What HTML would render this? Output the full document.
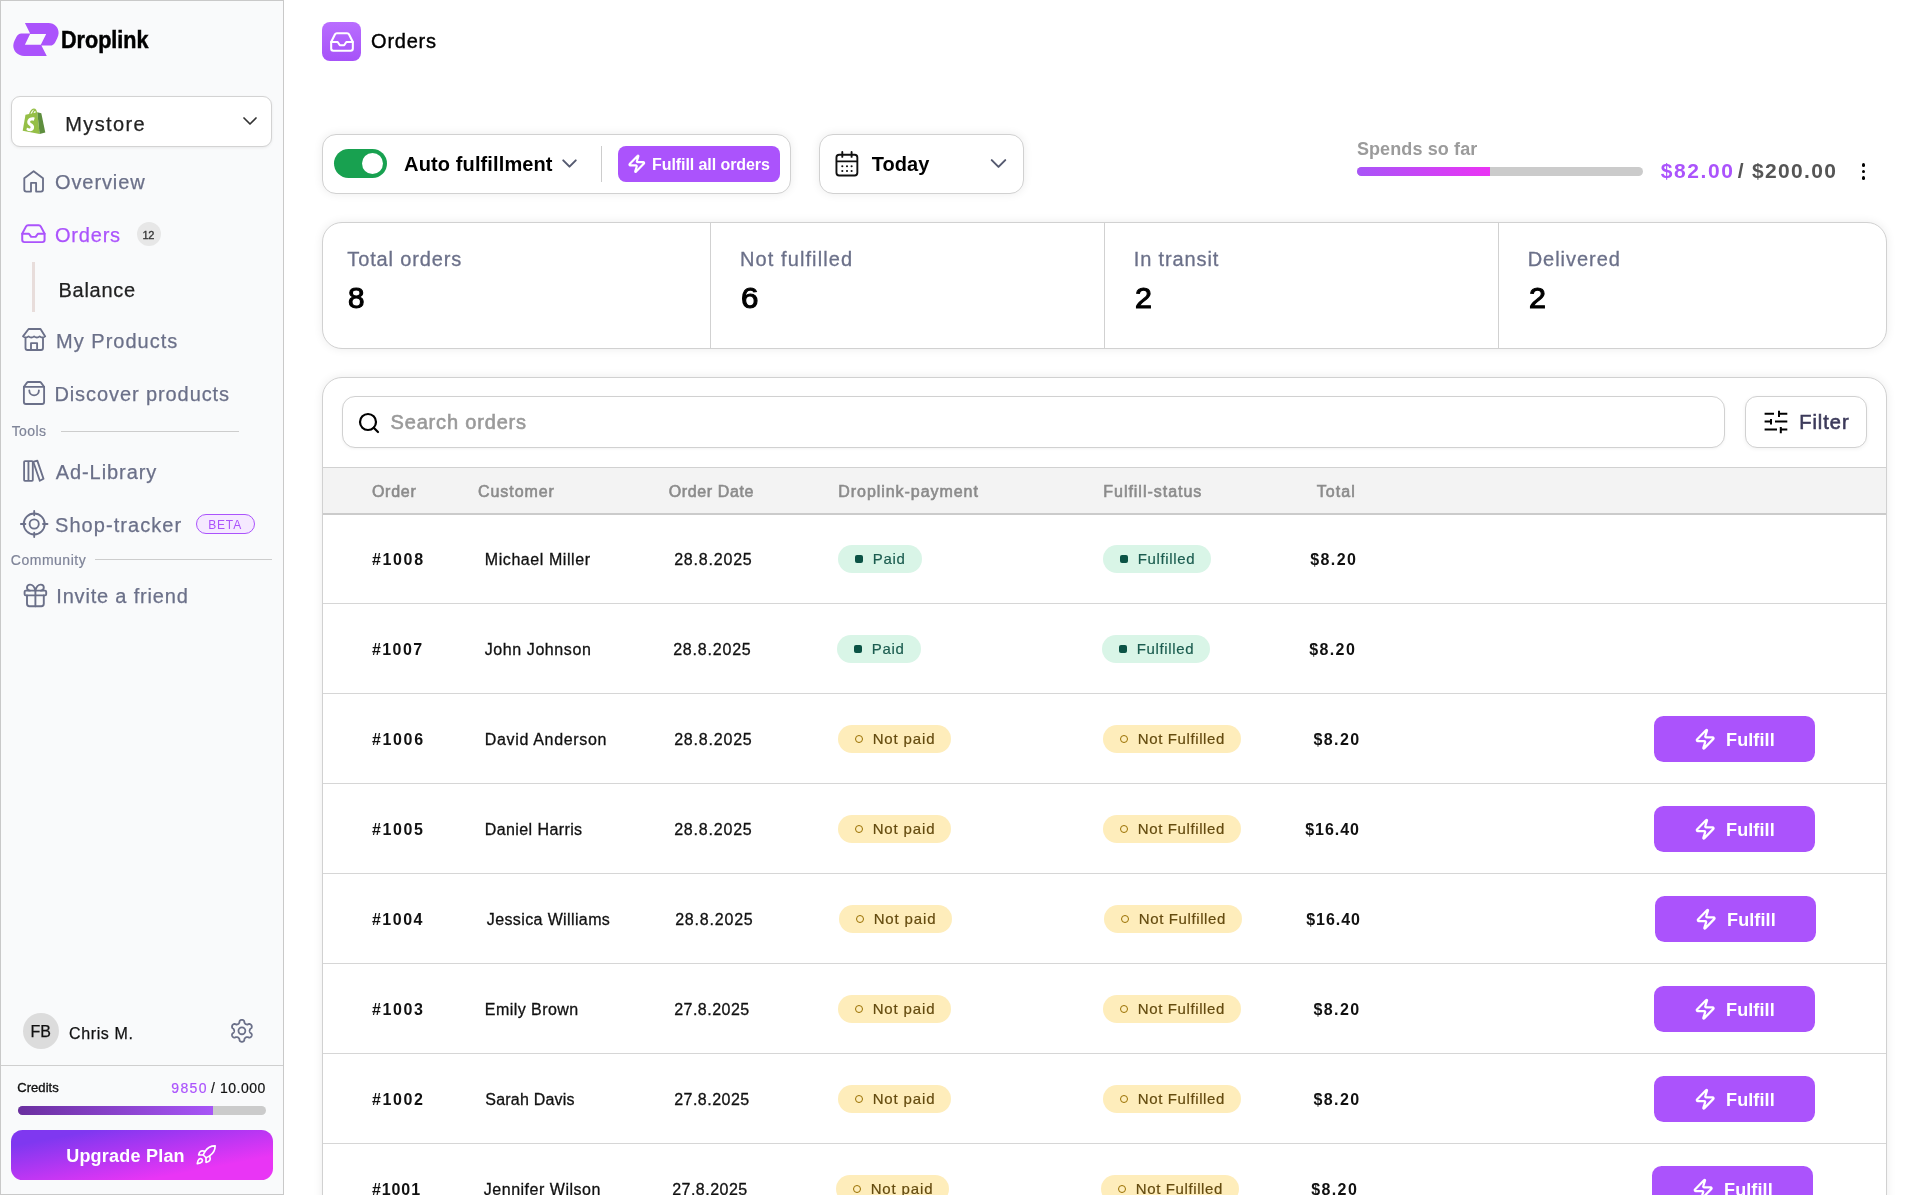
<!DOCTYPE html>
<html lang="en">
<head>
<meta charset="utf-8">
<title>Droplink – Orders</title>
<style>
*{box-sizing:border-box;margin:0;padding:0}
html,body{width:1912px;height:1195px;overflow:hidden;background:#fff;font-family:"Liberation Sans",sans-serif}
body{position:relative}
.t{position:absolute;white-space:nowrap;display:block}
.a{position:absolute}
.ic{position:absolute;overflow:visible}
#side{position:absolute;left:0;top:0;width:284px;height:1195px;background:#f9fafb;border:1px solid #c9c9c9}
.card{position:absolute;background:#fff;border:1px solid #d1d1d1;box-shadow:0 0 10px rgba(0,0,0,.08)}
.bd{position:absolute;height:28px;border-radius:14px}
.bd.g{background:#d9f5e7}
.bd.y{background:#feedbb}
.sq{position:absolute;width:8px;height:8px;border-radius:2px;background:#0b5345}
.rg{position:absolute;width:8.400px;height:8.400px;border-radius:50%;border:1.700px solid #9a7000}
.fb{position:absolute;width:161px;height:46px;border-radius:9.5px;background:#ab53fc}
.hl{position:absolute;left:323px;width:1563px;height:1px;background:#d6d6d6}
</style>
</head>
<body>
<svg width="0" height="0" style="position:absolute">
<defs>
<path id="zap" d="M4 14a1 1 0 0 1-.78-1.63l9.9-10.2a.5.5 0 0 1 .86.46l-1.92 6.02A1 1 0 0 0 13 10h7a1 1 0 0 1 .78 1.63l-9.9 10.2a.5.5 0 0 1-.86-.46l1.92-6.02A1 1 0 0 0 11 14z"/>
<g id="inbox"><polyline points="22 12 16 12 14 15 10 15 8 12 2 12"/><path d="M5.45 5.11 2 12v6a2 2 0 0 0 2 2h16a2 2 0 0 0 2-2v-6l-3.45-6.89A2 2 0 0 0 16.76 4H7.24a2 2 0 0 0-1.79 1.11z"/></g>
<polyline id="chev" points="6 9 12 15 18 9"/>
</defs>
</svg>

<!-- ================= SIDEBAR ================= -->
<div id="side"></div>
<!-- logo -->
<svg class="ic" style="left:0;top:0;width:70px;height:70px" viewBox="0 0 70 70"><path fill="#ab53fc" fill-rule="evenodd" d="M24.9 23h23.6c6 0 10.4 4.6 10.1 10.2c-.1 1.800-.6 3.4-1.400 5l-2.100 4.200c-1 2-2.800 3.200-5 3.200h-8.700l5.400 10.300h-22.600c-6.300 0-11.200-5-10.900-10.700c.1-1.600.6-3.100 1.300-4.600l1.900-3.800c.9-2 2.700-3.300 4.800-3.300h8.800zM30.100 33.900l-5.200 10.900h15.900l5.400-10.900z"/></svg>
<!-- store select -->
<div class="a" style="left:11px;top:96px;width:261px;height:51px;background:#fff;border:1px solid #d3d3d3;border-radius:9px;box-shadow:0 1px 3px rgba(0,0,0,.07)"></div>
<svg class="ic" style="left:22px;top:107.500px;width:24px;height:27px" viewBox="0 0 24 27">
<path fill="#95bf47" d="M3.500 6.800 15.300 4.300 17.600 25.900 0.700 22.800z"/>
<path fill="#5e8e3e" d="M15.300 4.300 19.300 5.200 23.300 24.600 17.600 25.900z"/>
<path fill="none" stroke="#95bf47" stroke-width="1.300" d="M7.500 7.500c.3-3.500 2.400-6.300 4.300-6.300 1.700 0 2.600 2.200 2.700 4.500M10.300 6.800c.6-2.800 2-4.800 3.400-5"/>
<path fill="#fff" d="M12.600 10.300l-.9 2.700s-.9-.5-2-.4c-1.500.1-1.500 1.100-1.500 1.300.1 1.400 3.700 1.700 3.900 4.900.2 2.600-1.400 4.300-3.600 4.400-2.700.2-4.100-1.400-4.100-1.400l.6-2.400s1.500 1.100 2.600 1c.8 0 1.100-.7 1-1.100-.1-1.800-3.100-1.700-3.300-4.700-.2-2.500 1.500-5.100 5.100-5.300 1.500-.1 2.200.3 2.200.3z"/>
</svg>
<svg class="ic" style="left:238.300px;top:109.400px;width:24px;height:24px" viewBox="0 0 24 24" fill="none" stroke="#333" stroke-width="1.700" stroke-linecap="round" stroke-linejoin="round"><use href="#chev"/></svg>
<!-- nav icons -->
<svg class="ic" style="left:0;top:160px;width:60px;height:460px" viewBox="0 160 60 460" fill="none" stroke="#6b7089" stroke-width="1.85" stroke-linecap="round" stroke-linejoin="round">
<path d="M31 191.600H26.300a2 2 0 0 1-2-2V178.200L33.650 171.300 43 178.200V189.600a2 2 0 0 1-2 2H36.100V182.800H31z"/>
<path d="M28.600 329H40.500L45.200 336.400q-2.775 2.300-5.550 0q-2.775 2.300-5.550 0q-2.775 2.300-5.550 0q-2.775 2.300-5.550 0z"/>
<path d="M25.500 338.700V348a2 2 0 0 0 2 2H41a2 2 0 0 0 2-2V338.700"/>
<path d="M31 350V343.100H37.100V350"/>
<path d="M23.900 386.700V402a2 2 0 0 0 2 2H42.100a2 2 0 0 0 2-2V386.700L41 382.600a1.500 1.500 0 0 0-1.200-.6H28.200a1.500 1.500 0 0 0-1.200.6z"/>
<path d="M23.900 386.800H44.100"/>
<path d="M29.300 390.500a4.800 4.800 0 0 0 9.600 0"/>
<path d="M24.100 461.900a.8.800 0 0 1 .8-.8H32a.8.800 0 0 1 .8.800V480.100a.8.800 0 0 1-.8.800H24.900a.8.800 0 0 1-.8-.8zM28.450 461.100V480.900"/>
<path d="M33.800 461.700 37.300 460.600 43.500 478.700 39.800 480.700 33.500 462.500"/>
<circle cx="34.200" cy="524" r="10.500"/><circle cx="34.200" cy="524" r="4.600"/>
<path d="M20.900 524H25.400M43 524H47.500M34.200 510.900V515.300M34.200 532.700V537.100"/>
</svg>
<svg class="ic" style="left:20.400px;top:221.300px;width:26.800px;height:25.400px" viewBox="0 0 24 24" preserveAspectRatio="none" fill="none" stroke="#ab53fc" stroke-width="1.800" stroke-linecap="round" stroke-linejoin="round"><use href="#inbox"/></svg>
<div class="a" style="left:137px;top:222px;width:24px;height:24px;border-radius:50%;background:#e7e7e7"></div>
<div class="a" style="left:32px;top:262px;width:3px;height:50px;background:#e8dddb"></div>
<div class="a" style="left:61px;top:431px;width:178px;height:1px;background:#cdcdcd"></div>
<div class="a" style="left:196px;top:514px;width:59px;height:20px;border-radius:10px;border:1px solid #ab53fc;background:#f5e9ff"></div>
<div class="a" style="left:95px;top:559px;width:177px;height:1px;background:#cdcdcd"></div>
<!-- gift -->
<svg class="ic" style="left:20.500px;top:581.300px;width:28.800px;height:28.800px" viewBox="0 0 24 24" fill="none" stroke="#6b7089" stroke-width="1.580" stroke-linecap="round" stroke-linejoin="round"><rect x="3" y="8" width="18" height="4" rx="1"/><path d="M12 8v13"/><path d="M19 12v7a2 2 0 0 1-2 2H7a2 2 0 0 1-2-2v-7"/><path d="M7.500 8a2.500 2.500 0 0 1 0-5A4.800 8 0 0 1 12 8a4.800 8 0 0 1 4.500-5 2.500 2.500 0 0 1 0 5"/></svg>
<!-- user -->
<div class="a" style="left:23px;top:1013px;width:36px;height:36px;border-radius:50%;background:#dcdcdc"></div>
<svg class="ic" style="left:220px;top:1010px;width:44px;height:44px" viewBox="220 1010 44 44" fill="none" stroke="#6b7089" stroke-width="1.800" stroke-linejoin="round"><path d="M249.60 1030.80 L249.61 1030.60 L249.63 1030.39 L249.68 1030.19 L249.74 1029.98 L249.82 1029.76 L249.92 1029.53 L250.04 1029.29 L250.20 1029.04 L250.41 1028.76 L250.93 1028.38 L251.44 1027.98 L251.61 1027.64 L251.72 1027.32 L251.78 1027.01 L251.80 1026.70 L251.78 1026.40 L251.74 1026.11 L251.66 1025.83 L251.56 1025.56 L251.43 1025.30 L251.27 1025.06 L251.09 1024.83 L250.88 1024.63 L250.65 1024.44 L250.40 1024.28 L250.12 1024.14 L249.82 1024.03 L249.49 1023.96 L249.11 1023.95 L248.51 1024.19 L247.93 1024.45 L247.58 1024.49 L247.28 1024.50 L247.01 1024.49 L246.76 1024.46 L246.53 1024.42 L246.32 1024.37 L246.12 1024.30 L245.93 1024.23 L245.75 1024.13 L245.58 1024.02 L245.42 1023.90 L245.26 1023.76 L245.11 1023.60 L244.96 1023.42 L244.81 1023.22 L244.66 1022.99 L244.52 1022.73 L244.39 1022.41 L244.32 1021.77 L244.22 1021.13 L244.02 1020.81 L243.80 1020.56 L243.56 1020.35 L243.30 1020.18 L243.03 1020.04 L242.76 1019.94 L242.47 1019.86 L242.19 1019.81 L241.90 1019.80 L241.61 1019.81 L241.33 1019.86 L241.04 1019.94 L240.77 1020.04 L240.50 1020.18 L240.24 1020.35 L240.00 1020.56 L239.78 1020.81 L239.58 1021.13 L239.48 1021.77 L239.41 1022.41 L239.28 1022.73 L239.14 1022.99 L238.99 1023.22 L238.84 1023.42 L238.69 1023.60 L238.54 1023.76 L238.38 1023.90 L238.22 1024.02 L238.05 1024.13 L237.87 1024.23 L237.68 1024.30 L237.48 1024.37 L237.27 1024.42 L237.04 1024.46 L236.79 1024.49 L236.52 1024.50 L236.22 1024.49 L235.87 1024.45 L235.29 1024.19 L234.69 1023.95 L234.31 1023.96 L233.98 1024.03 L233.68 1024.14 L233.40 1024.28 L233.15 1024.44 L232.92 1024.63 L232.71 1024.83 L232.53 1025.06 L232.37 1025.30 L232.24 1025.56 L232.14 1025.83 L232.06 1026.11 L232.02 1026.40 L232.00 1026.70 L232.02 1027.01 L232.08 1027.32 L232.19 1027.64 L232.36 1027.98 L232.87 1028.38 L233.39 1028.76 L233.60 1029.04 L233.76 1029.29 L233.88 1029.53 L233.98 1029.76 L234.06 1029.98 L234.12 1030.19 L234.17 1030.39 L234.19 1030.60 L234.20 1030.80 L234.19 1031.00 L234.17 1031.21 L234.12 1031.41 L234.06 1031.62 L233.98 1031.84 L233.88 1032.07 L233.76 1032.31 L233.60 1032.56 L233.39 1032.84 L232.87 1033.22 L232.36 1033.62 L232.19 1033.96 L232.08 1034.28 L232.02 1034.59 L232.00 1034.90 L232.02 1035.20 L232.06 1035.49 L232.14 1035.77 L232.24 1036.04 L232.37 1036.30 L232.53 1036.54 L232.71 1036.77 L232.92 1036.97 L233.15 1037.16 L233.40 1037.32 L233.68 1037.46 L233.98 1037.57 L234.31 1037.64 L234.69 1037.65 L235.29 1037.41 L235.87 1037.15 L236.22 1037.11 L236.52 1037.10 L236.79 1037.11 L237.04 1037.14 L237.27 1037.18 L237.48 1037.23 L237.68 1037.30 L237.87 1037.37 L238.05 1037.47 L238.22 1037.58 L238.38 1037.70 L238.54 1037.84 L238.69 1038.00 L238.84 1038.18 L238.99 1038.38 L239.14 1038.61 L239.28 1038.87 L239.41 1039.19 L239.48 1039.83 L239.58 1040.47 L239.78 1040.79 L240.00 1041.04 L240.24 1041.25 L240.50 1041.42 L240.77 1041.56 L241.04 1041.66 L241.33 1041.74 L241.61 1041.79 L241.90 1041.80 L242.19 1041.79 L242.47 1041.74 L242.76 1041.66 L243.03 1041.56 L243.30 1041.42 L243.56 1041.25 L243.80 1041.04 L244.02 1040.79 L244.22 1040.47 L244.32 1039.83 L244.39 1039.19 L244.52 1038.87 L244.66 1038.61 L244.81 1038.38 L244.96 1038.18 L245.11 1038.00 L245.26 1037.84 L245.42 1037.70 L245.58 1037.58 L245.75 1037.47 L245.93 1037.37 L246.12 1037.30 L246.32 1037.23 L246.53 1037.18 L246.76 1037.14 L247.01 1037.11 L247.28 1037.10 L247.58 1037.11 L247.93 1037.15 L248.51 1037.41 L249.11 1037.65 L249.49 1037.64 L249.82 1037.57 L250.12 1037.46 L250.40 1037.32 L250.65 1037.16 L250.88 1036.97 L251.09 1036.77 L251.27 1036.54 L251.43 1036.30 L251.56 1036.04 L251.66 1035.77 L251.74 1035.49 L251.78 1035.20 L251.80 1034.90 L251.78 1034.59 L251.72 1034.28 L251.61 1033.96 L251.44 1033.62 L250.93 1033.22 L250.41 1032.84 L250.20 1032.56 L250.04 1032.31 L249.92 1032.07 L249.82 1031.84 L249.74 1031.62 L249.68 1031.41 L249.63 1031.21 L249.61 1031.00Z"/><circle cx="241.9" cy="1030.8" r="3.450"/></svg>
<div class="a" style="left:1px;top:1065px;width:282px;height:1px;background:#cfcfcf"></div>
<div class="a" style="left:17.600px;top:1106px;width:248px;height:9px;border-radius:4.500px;background:#cbcbcb;overflow:hidden"><div style="width:195.800px;height:9px;background:linear-gradient(90deg,#6a2f9f,#a855f7)"></div></div>
<div class="a" style="left:11.400px;top:1129.900px;width:261.200px;height:50px;border-radius:11.500px;background:linear-gradient(to bottom right,#7f38f0 16%,#e935f5 76%)"></div>
<svg class="ic" style="left:194.900px;top:1144px;width:22px;height:22px" viewBox="0 0 24 24" fill="none" stroke="#fff" stroke-width="1.800" stroke-linecap="round" stroke-linejoin="round"><path d="M4.500 16.500c-1.500 1.260-2 5-2 5s3.740-.500 5-2c.710-.840.700-2.130-.09-2.910a2.180 2.180 0 0 0-2.910-.09z"/><path d="m12 15-3-3a22 22 0 0 1 2-3.950A12.880 12.880 0 0 1 22 2c0 2.720-.780 7.500-6 11a22.350 22.350 0 0 1-4 2z"/><path d="M9 12H4s.550-3.030 2-4c1.620-1.080 5 0 5 0"/><path d="M12 15v5s3.030-.550 4-2c1.080-1.620 0-5 0-5"/></svg>

<!-- ================= MAIN ================= -->
<div class="a" style="left:322px;top:22px;width:39px;height:39px;border-radius:8px;background:linear-gradient(180deg,#b96dff,#a652f8)"></div>
<svg class="ic" style="left:329px;top:29px;width:26px;height:26px" viewBox="0 0 24 24" fill="none" stroke="#fff" stroke-width="1.900" stroke-linecap="round" stroke-linejoin="round"><use href="#inbox"/></svg>

<!-- toolbar -->
<div class="card" style="left:322px;top:134px;width:469px;height:60px;border-radius:14px"></div>
<div class="a" style="left:334px;top:149.100px;width:53px;height:29.200px;border-radius:14.600px;background:#18a150"></div>
<div class="a" style="left:361.800px;top:152.900px;width:21.600px;height:21.600px;border-radius:50%;background:#fff"></div>
<svg class="ic" style="left:556.600px;top:151.100px;width:25px;height:25px" viewBox="0 0 24 24" fill="none" stroke="#555a70" stroke-width="1.900" stroke-linecap="round" stroke-linejoin="round"><use href="#chev"/></svg>
<div class="a" style="left:601.300px;top:146.200px;width:1px;height:35.600px;background:#cdcdcd"></div>
<div class="a" style="left:618px;top:146px;width:162px;height:36px;border-radius:8px;background:#ab53fc"></div>
<svg class="ic" style="left:626.700px;top:154px;width:19.600px;height:19.600px" viewBox="0 0 24 24" fill="none" stroke="#fff" stroke-width="2.600" stroke-linecap="round" stroke-linejoin="round"><use href="#zap"/></svg>
<div class="card" style="left:819.400px;top:134px;width:204.300px;height:60px;border-radius:14px"></div>
<svg class="ic" style="left:830px;top:146px;width:34px;height:34px" viewBox="830 146 34 34" fill="none" stroke="#111" stroke-width="1.900" stroke-linecap="round" stroke-linejoin="round"><rect x="836.450" y="154.700" width="20.900" height="20.750" rx="2.700"/><path d="M842.300 151.900V156.900M851.600 151.900V156.900M837.200 161.400H856.600"/><path stroke-width="2.100" d="M842.300 166.300h.01M847 166.300h.01M851.600 166.300h.01M842.300 171h.01M847 171h.01M851.600 171h.01"/></svg>
<svg class="ic" style="left:985.300px;top:150.300px;width:27px;height:27px" viewBox="0 0 24 24" fill="none" stroke="#555a70" stroke-width="1.800" stroke-linecap="round" stroke-linejoin="round"><use href="#chev"/></svg>

<!-- spends -->
<div class="a" style="left:1357px;top:167px;width:286px;height:9px;border-radius:4.500px;background:#cbcbcb;overflow:hidden"><div style="width:133.200px;height:9px;background:linear-gradient(90deg,#a855f7,#ea34f4)"></div></div>
<div class="a" style="left:1861.700px;top:163.100px;width:3.700px;height:3.700px;border-radius:50%;background:#000"></div>
<div class="a" style="left:1861.700px;top:169.700px;width:3.700px;height:3.700px;border-radius:50%;background:#000"></div>
<div class="a" style="left:1861.700px;top:176.200px;width:3.700px;height:3.700px;border-radius:50%;background:#000"></div>

<!-- stats -->
<div class="card" style="left:322px;top:222px;width:1565px;height:127px;border-radius:20px"></div>
<div class="a" style="left:710px;top:223px;width:1px;height:125px;background:#d1d1d1"></div>
<div class="a" style="left:1104px;top:223px;width:1px;height:125px;background:#d1d1d1"></div>
<div class="a" style="left:1498px;top:223px;width:1px;height:125px;background:#d1d1d1"></div>

<!-- table card -->
<div class="card" style="left:322px;top:377px;width:1565px;height:860px;border-radius:20px 20px 0 0"></div>
<div class="card" style="left:342px;top:396px;width:1383px;height:52px;border-radius:13px;box-shadow:0 1px 3px rgba(0,0,0,.05)"></div>
<svg class="ic" style="left:357.300px;top:410.600px;width:24px;height:24px" viewBox="0 0 24 24" fill="none" stroke="#000" stroke-width="2.200" stroke-linecap="round" stroke-linejoin="round"><circle cx="11" cy="11" r="8"/><path d="m21 21-4.300-4.300"/></svg>
<div class="card" style="left:1745px;top:396px;width:122px;height:52px;border-radius:12px;box-shadow:0 1px 4px rgba(0,0,0,.06)"></div>
<svg class="ic" style="left:1760px;top:406px;width:32px;height:32px" viewBox="1760 406 32 32" fill="none" stroke="#000" stroke-width="2" stroke-linecap="butt">
<path d="M1764.600 413.800H1774M1779 413.800H1787.300M1779 410.800V416.900"/>
<path d="M1764.600 421.600H1771M1775 421.600H1787.300M1771 418.900V424.600"/>
<path d="M1764.600 429.600H1777M1780.800 429.600H1787.300M1780.800 426.900V433.200"/>
</svg>
<div class="a" style="left:323px;top:467px;width:1563px;height:1px;background:#d1d1d1"></div>
<div class="a" style="left:323px;top:468px;width:1563px;height:45px;background:#f3f3f3"></div>
<div class="a" style="left:323px;top:513px;width:1563px;height:2px;background:#cbcbcb"></div>
<div class="hl" style="top:603px"></div>
<div class="hl" style="top:693px"></div>
<div class="hl" style="top:783px"></div>
<div class="hl" style="top:873px"></div>
<div class="hl" style="top:963px"></div>
<div class="hl" style="top:1053px"></div>
<div class="hl" style="top:1143px"></div>
<div class="bd g" style="left:838.2px;top:544.9px;width:83.7px"></div><div class="sq" style="left:855.2px;top:554.9px"></div>
<div class="bd g" style="left:1103.0px;top:544.9px;width:108px"></div><div class="sq" style="left:1120.0px;top:554.9px"></div>
<div class="bd g" style="left:837.2px;top:634.9px;width:83.7px"></div><div class="sq" style="left:854.2px;top:644.9px"></div>
<div class="bd g" style="left:1102.0px;top:634.9px;width:108px"></div><div class="sq" style="left:1119.0px;top:644.9px"></div>
<div class="bd y" style="left:838.2px;top:724.9px;width:112.7px"></div><div class="rg" style="left:855.0px;top:734.7px"></div>
<div class="bd y" style="left:1103.0px;top:724.9px;width:137.9px"></div><div class="rg" style="left:1119.8px;top:734.7px"></div>
<div class="fb" style="left:1654.0px;top:715.9px"></div><svg class="ic" style="left:1694.0px;top:727.9px;width:22.400px;height:22.400px" viewBox="0 0 24 24" fill="none" stroke="#fff" stroke-width="2.400" stroke-linecap="round" stroke-linejoin="round"><use href="#zap"/></svg>
<div class="bd y" style="left:838.2px;top:814.9px;width:112.7px"></div><div class="rg" style="left:855.0px;top:824.7px"></div>
<div class="bd y" style="left:1103.0px;top:814.9px;width:137.9px"></div><div class="rg" style="left:1119.8px;top:824.7px"></div>
<div class="fb" style="left:1654.0px;top:805.9px"></div><svg class="ic" style="left:1694.0px;top:817.9px;width:22.400px;height:22.400px" viewBox="0 0 24 24" fill="none" stroke="#fff" stroke-width="2.400" stroke-linecap="round" stroke-linejoin="round"><use href="#zap"/></svg>
<div class="bd y" style="left:839.2px;top:904.9px;width:112.7px"></div><div class="rg" style="left:856.0px;top:914.7px"></div>
<div class="bd y" style="left:1104.0px;top:904.9px;width:137.9px"></div><div class="rg" style="left:1120.8px;top:914.7px"></div>
<div class="fb" style="left:1655.0px;top:895.9px"></div><svg class="ic" style="left:1695.0px;top:907.9px;width:22.400px;height:22.400px" viewBox="0 0 24 24" fill="none" stroke="#fff" stroke-width="2.400" stroke-linecap="round" stroke-linejoin="round"><use href="#zap"/></svg>
<div class="bd y" style="left:838.2px;top:994.9px;width:112.7px"></div><div class="rg" style="left:855.0px;top:1004.7px"></div>
<div class="bd y" style="left:1103.0px;top:994.9px;width:137.9px"></div><div class="rg" style="left:1119.8px;top:1004.7px"></div>
<div class="fb" style="left:1654.0px;top:985.9px"></div><svg class="ic" style="left:1694.0px;top:997.9px;width:22.400px;height:22.400px" viewBox="0 0 24 24" fill="none" stroke="#fff" stroke-width="2.400" stroke-linecap="round" stroke-linejoin="round"><use href="#zap"/></svg>
<div class="bd y" style="left:838.2px;top:1084.9px;width:112.7px"></div><div class="rg" style="left:855.0px;top:1094.7px"></div>
<div class="bd y" style="left:1103.0px;top:1084.9px;width:137.9px"></div><div class="rg" style="left:1119.8px;top:1094.7px"></div>
<div class="fb" style="left:1654.0px;top:1075.9px"></div><svg class="ic" style="left:1694.0px;top:1087.9px;width:22.400px;height:22.400px" viewBox="0 0 24 24" fill="none" stroke="#fff" stroke-width="2.400" stroke-linecap="round" stroke-linejoin="round"><use href="#zap"/></svg>
<div class="bd y" style="left:836.2px;top:1174.9px;width:112.7px"></div><div class="rg" style="left:853.0px;top:1184.7px"></div>
<div class="bd y" style="left:1101.0px;top:1174.9px;width:137.9px"></div><div class="rg" style="left:1117.8px;top:1184.7px"></div>
<div class="fb" style="left:1652.0px;top:1165.9px"></div><svg class="ic" style="left:1692.0px;top:1177.9px;width:22.400px;height:22.400px" viewBox="0 0 24 24" fill="none" stroke="#fff" stroke-width="2.400" stroke-linecap="round" stroke-linejoin="round"><use href="#zap"/></svg>
<div id="tx" style="position:absolute;left:0;top:0;width:1912px;height:1195px;will-change:transform">
<span class="t" style="left:60.91px;top:28.00px;font-size:24.5px;line-height:24.5px;color:#000;transform:scaleX(0.8810);transform-origin:0 0;font-weight:700;-webkit-text-stroke:0.5px #000;">Droplink</span>
<span class="t" style="left:65.28px;top:114.00px;font-size:20px;line-height:20px;color:#222;letter-spacing:1.358px;-webkit-text-stroke:0.25px #222;">Mystore</span>
<span class="t" style="left:55.02px;top:172.00px;font-size:20px;line-height:20px;color:#6b7089;letter-spacing:0.900px;-webkit-text-stroke:0.25px #6b7089;">Overview</span>
<span class="t" style="left:55.02px;top:225.00px;font-size:20px;line-height:20px;color:#ab53fc;letter-spacing:0.790px;-webkit-text-stroke:0.25px #ab53fc;">Orders</span>
<span class="t" style="left:142.60px;top:230.00px;font-size:11px;line-height:11px;color:#333;letter-spacing:-0.400px;-webkit-text-stroke:0.3px #333;">12</span>
<span class="t" style="left:58.48px;top:280.00px;font-size:20px;line-height:20px;color:#222;letter-spacing:0.725px;-webkit-text-stroke:0.25px #222;">Balance</span>
<span class="t" style="left:56.08px;top:331.00px;font-size:20px;line-height:20px;color:#6b7089;letter-spacing:1.010px;-webkit-text-stroke:0.25px #6b7089;">My Products</span>
<span class="t" style="left:54.38px;top:384.00px;font-size:20px;line-height:20px;color:#6b7089;letter-spacing:0.916px;-webkit-text-stroke:0.25px #6b7089;">Discover products</span>
<span class="t" style="left:11.65px;top:424.00px;font-size:14px;line-height:14px;color:#7f8498;letter-spacing:0.425px;-webkit-text-stroke:0.2px #7f8498;">Tools</span>
<span class="t" style="left:55.73px;top:462.00px;font-size:20px;line-height:20px;color:#6b7089;letter-spacing:0.922px;-webkit-text-stroke:0.25px #6b7089;">Ad-Library</span>
<span class="t" style="left:55.02px;top:515.00px;font-size:20px;line-height:20px;color:#6b7089;letter-spacing:1.055px;-webkit-text-stroke:0.25px #6b7089;">Shop-tracker</span>
<span class="t" style="left:208.20px;top:519.00px;font-size:12px;line-height:12px;color:#ab53fc;letter-spacing:0.833px;">BETA</span>
<span class="t" style="left:10.85px;top:553.00px;font-size:14px;line-height:14px;color:#7f8498;letter-spacing:0.500px;-webkit-text-stroke:0.2px #7f8498;">Community</span>
<span class="t" style="left:56.27px;top:586.00px;font-size:20px;line-height:20px;color:#6b7089;letter-spacing:0.818px;-webkit-text-stroke:0.25px #6b7089;">Invite a friend</span>
<span class="t" style="left:30.48px;top:1024.00px;font-size:16px;line-height:16px;color:#111;letter-spacing:0.000px;-webkit-text-stroke:0.25px #111;">FB</span>
<span class="t" style="left:69.08px;top:1026.00px;font-size:16px;line-height:16px;color:#111;letter-spacing:0.600px;-webkit-text-stroke:0.25px #111;">Chris M.</span>
<span class="t" style="left:17.23px;top:1081.00px;font-size:13px;line-height:13px;color:#111;letter-spacing:0.058px;-webkit-text-stroke:0.35px #111;">Credits</span>
<span class="t" style="left:171.15px;top:1081.00px;font-size:14px;line-height:14px;color:#ab53fc;letter-spacing:1.450px;-webkit-text-stroke:0.2px #ab53fc;">9850</span>
<span class="t" style="left:211.10px;top:1081.00px;font-size:14px;line-height:14px;color:#111;letter-spacing:0.514px;-webkit-text-stroke:0.2px #111;">/ 10.000</span>
<span class="t" style="left:66.20px;top:1147.00px;font-size:18px;line-height:18px;color:#fff;letter-spacing:0.218px;font-weight:700;">Upgrade Plan</span>
<span class="t" style="left:371.10px;top:31.00px;font-size:20px;line-height:20px;color:#000;letter-spacing:0.740px;-webkit-text-stroke:0.4px #000;">Orders</span>
<span class="t" style="left:404.10px;top:154.00px;font-size:20px;line-height:20px;color:#000;letter-spacing:0.120px;font-weight:700;">Auto fulfillment</span>
<span class="t" style="left:652.00px;top:157.00px;font-size:16px;line-height:16px;color:#fff;letter-spacing:-0.071px;font-weight:700;">Fulfill all orders</span>
<span class="t" style="left:871.65px;top:154.00px;font-size:20px;line-height:20px;color:#000;letter-spacing:0.100px;font-weight:700;">Today</span>
<span class="t" style="left:1356.90px;top:140.00px;font-size:18px;line-height:18px;color:#9b9b9b;letter-spacing:0.112px;font-weight:700;">Spends so far</span>
<span class="t" style="left:1660.75px;top:160.00px;font-size:21px;line-height:21px;color:#ab53fc;letter-spacing:1.600px;font-weight:700;">$82.00</span>
<span class="t" style="left:1737.65px;top:160.00px;font-size:21px;line-height:21px;color:#555;letter-spacing:1.325px;font-weight:700;">/ $200.00</span>
<span class="t" style="left:347.35px;top:249.00px;font-size:20px;line-height:20px;color:#6b7089;letter-spacing:0.850px;-webkit-text-stroke:0.3px #6b7089;">Total orders</span>
<span class="t" style="left:740.00px;top:249.00px;font-size:20px;line-height:20px;color:#6b7089;letter-spacing:1.092px;-webkit-text-stroke:0.3px #6b7089;">Not fulfilled</span>
<span class="t" style="left:1133.70px;top:249.00px;font-size:20px;line-height:20px;color:#6b7089;letter-spacing:0.883px;-webkit-text-stroke:0.3px #6b7089;">In transit</span>
<span class="t" style="left:1527.70px;top:249.00px;font-size:20px;line-height:20px;color:#6b7089;letter-spacing:0.962px;-webkit-text-stroke:0.3px #6b7089;">Delivered</span>
<span class="t" style="left:347.87px;top:284.00px;font-size:29px;line-height:29px;color:#000;transform:scaleX(1.0222);transform-origin:0 0;-webkit-text-stroke:1.1px #000;">8</span>
<span class="t" style="left:741.33px;top:284.00px;font-size:29px;line-height:29px;color:#000;transform:scaleX(1.0792);transform-origin:0 0;-webkit-text-stroke:1.1px #000;">6</span>
<span class="t" style="left:1135.28px;top:284.00px;font-size:29px;line-height:29px;color:#000;transform:scaleX(1.0491);transform-origin:0 0;-webkit-text-stroke:1.1px #000;">2</span>
<span class="t" style="left:1529.28px;top:284.00px;font-size:29px;line-height:29px;color:#000;transform:scaleX(1.0491);transform-origin:0 0;-webkit-text-stroke:1.1px #000;">2</span>
<span class="t" style="left:390.50px;top:412.00px;font-size:20px;line-height:20px;color:#9a9a9a;letter-spacing:0.833px;-webkit-text-stroke:0.6px #9a9a9a;">Search orders</span>
<span class="t" style="left:1799.25px;top:412.00px;font-size:20px;line-height:20px;color:#3c3a5a;letter-spacing:0.980px;-webkit-text-stroke:0.6px #3c3a5a;">Filter</span>
<span class="t" style="left:371.95px;top:484.00px;font-size:16px;line-height:16px;color:#8b8b8b;letter-spacing:0.737px;-webkit-text-stroke:0.6px #8b8b8b;">Order</span>
<span class="t" style="left:478.05px;top:484.00px;font-size:16px;line-height:16px;color:#8b8b8b;letter-spacing:0.921px;-webkit-text-stroke:0.6px #8b8b8b;">Customer</span>
<span class="t" style="left:668.75px;top:484.00px;font-size:16px;line-height:16px;color:#8b8b8b;letter-spacing:0.606px;-webkit-text-stroke:0.6px #8b8b8b;">Order Date</span>
<span class="t" style="left:838.35px;top:484.00px;font-size:16px;line-height:16px;color:#8b8b8b;letter-spacing:0.940px;-webkit-text-stroke:0.6px #8b8b8b;">Droplink-payment</span>
<span class="t" style="left:1103.25px;top:484.00px;font-size:16px;line-height:16px;color:#8b8b8b;letter-spacing:0.977px;-webkit-text-stroke:0.6px #8b8b8b;">Fulfill-status</span>
<span class="t" style="left:1316.65px;top:484.00px;font-size:16px;line-height:16px;color:#8b8b8b;letter-spacing:1.075px;-webkit-text-stroke:0.6px #8b8b8b;">Total</span>
<span class="t" style="left:371.95px;top:552.00px;font-size:16px;line-height:16px;color:#111;letter-spacing:1.662px;font-weight:700;">#1008</span>
<span class="t" style="left:484.80px;top:552.00px;font-size:16px;line-height:16px;color:#111;letter-spacing:0.573px;-webkit-text-stroke:0.3px #111;">Michael Miller</span>
<span class="t" style="left:674.15px;top:552.00px;font-size:16px;line-height:16px;color:#111;letter-spacing:0.806px;-webkit-text-stroke:0.3px #111;">28.8.2025</span>
<span class="t" style="left:1310.25px;top:552.00px;font-size:16px;line-height:16px;color:#111;letter-spacing:1.400px;font-weight:700;">$8.20</span>
<span class="t" style="left:872.75px;top:551.00px;font-size:15px;line-height:15px;color:#1b5c4f;letter-spacing:0.683px;-webkit-text-stroke:0.2px #1b5c4f;">Paid</span>
<span class="t" style="left:1137.65px;top:551.00px;font-size:15px;line-height:15px;color:#1b5c4f;letter-spacing:0.650px;-webkit-text-stroke:0.2px #1b5c4f;">Fulfilled</span>
<span class="t" style="left:371.95px;top:642.00px;font-size:16px;line-height:16px;color:#111;letter-spacing:1.425px;font-weight:700;">#1007</span>
<span class="t" style="left:484.80px;top:642.00px;font-size:16px;line-height:16px;color:#111;letter-spacing:0.577px;-webkit-text-stroke:0.3px #111;">John Johnson</span>
<span class="t" style="left:673.15px;top:642.00px;font-size:16px;line-height:16px;color:#111;letter-spacing:0.806px;-webkit-text-stroke:0.3px #111;">28.8.2025</span>
<span class="t" style="left:1309.15px;top:642.00px;font-size:16px;line-height:16px;color:#111;letter-spacing:1.400px;font-weight:700;">$8.20</span>
<span class="t" style="left:871.75px;top:641.00px;font-size:15px;line-height:15px;color:#1b5c4f;letter-spacing:0.683px;-webkit-text-stroke:0.2px #1b5c4f;">Paid</span>
<span class="t" style="left:1136.65px;top:641.00px;font-size:15px;line-height:15px;color:#1b5c4f;letter-spacing:0.650px;-webkit-text-stroke:0.2px #1b5c4f;">Fulfilled</span>
<span class="t" style="left:371.95px;top:732.00px;font-size:16px;line-height:16px;color:#111;letter-spacing:1.662px;font-weight:700;">#1006</span>
<span class="t" style="left:484.80px;top:732.00px;font-size:16px;line-height:16px;color:#111;letter-spacing:0.665px;-webkit-text-stroke:0.3px #111;">David Anderson</span>
<span class="t" style="left:674.15px;top:732.00px;font-size:16px;line-height:16px;color:#111;letter-spacing:0.806px;-webkit-text-stroke:0.3px #111;">28.8.2025</span>
<span class="t" style="left:1313.45px;top:732.00px;font-size:16px;line-height:16px;color:#111;letter-spacing:1.400px;font-weight:700;">$8.20</span>
<span class="t" style="left:872.65px;top:731.00px;font-size:15px;line-height:15px;color:#644b0f;letter-spacing:0.857px;-webkit-text-stroke:0.2px #644b0f;">Not paid</span>
<span class="t" style="left:1137.75px;top:731.00px;font-size:15px;line-height:15px;color:#644b0f;letter-spacing:0.617px;-webkit-text-stroke:0.2px #644b0f;">Not Fulfilled</span>
<span class="t" style="left:1726.05px;top:731.00px;font-size:18px;line-height:18px;color:#fff;letter-spacing:0.100px;font-weight:700;">Fulfill</span>
<span class="t" style="left:371.95px;top:822.00px;font-size:16px;line-height:16px;color:#111;letter-spacing:1.612px;font-weight:700;">#1005</span>
<span class="t" style="left:484.80px;top:822.00px;font-size:16px;line-height:16px;color:#111;letter-spacing:0.404px;-webkit-text-stroke:0.3px #111;">Daniel Harris</span>
<span class="t" style="left:674.15px;top:822.00px;font-size:16px;line-height:16px;color:#111;letter-spacing:0.806px;-webkit-text-stroke:0.3px #111;">28.8.2025</span>
<span class="t" style="left:1305.15px;top:822.00px;font-size:16px;line-height:16px;color:#111;letter-spacing:0.980px;font-weight:700;">$16.40</span>
<span class="t" style="left:872.65px;top:821.00px;font-size:15px;line-height:15px;color:#644b0f;letter-spacing:0.857px;-webkit-text-stroke:0.2px #644b0f;">Not paid</span>
<span class="t" style="left:1137.75px;top:821.00px;font-size:15px;line-height:15px;color:#644b0f;letter-spacing:0.617px;-webkit-text-stroke:0.2px #644b0f;">Not Fulfilled</span>
<span class="t" style="left:1726.05px;top:821.00px;font-size:18px;line-height:18px;color:#fff;letter-spacing:0.100px;font-weight:700;">Fulfill</span>
<span class="t" style="left:371.95px;top:912.00px;font-size:16px;line-height:16px;color:#111;letter-spacing:1.513px;font-weight:700;">#1004</span>
<span class="t" style="left:486.80px;top:912.00px;font-size:16px;line-height:16px;color:#111;letter-spacing:0.380px;-webkit-text-stroke:0.3px #111;">Jessica Williams</span>
<span class="t" style="left:675.15px;top:912.00px;font-size:16px;line-height:16px;color:#111;letter-spacing:0.806px;-webkit-text-stroke:0.3px #111;">28.8.2025</span>
<span class="t" style="left:1306.15px;top:912.00px;font-size:16px;line-height:16px;color:#111;letter-spacing:0.980px;font-weight:700;">$16.40</span>
<span class="t" style="left:873.65px;top:911.00px;font-size:15px;line-height:15px;color:#644b0f;letter-spacing:0.857px;-webkit-text-stroke:0.2px #644b0f;">Not paid</span>
<span class="t" style="left:1138.75px;top:911.00px;font-size:15px;line-height:15px;color:#644b0f;letter-spacing:0.617px;-webkit-text-stroke:0.2px #644b0f;">Not Fulfilled</span>
<span class="t" style="left:1727.05px;top:911.00px;font-size:18px;line-height:18px;color:#fff;letter-spacing:0.100px;font-weight:700;">Fulfill</span>
<span class="t" style="left:371.95px;top:1002.00px;font-size:16px;line-height:16px;color:#111;letter-spacing:1.638px;font-weight:700;">#1003</span>
<span class="t" style="left:484.80px;top:1002.00px;font-size:16px;line-height:16px;color:#111;letter-spacing:0.450px;-webkit-text-stroke:0.3px #111;">Emily Brown</span>
<span class="t" style="left:674.15px;top:1002.00px;font-size:16px;line-height:16px;color:#111;letter-spacing:0.481px;-webkit-text-stroke:0.3px #111;">27.8.2025</span>
<span class="t" style="left:1313.45px;top:1002.00px;font-size:16px;line-height:16px;color:#111;letter-spacing:1.400px;font-weight:700;">$8.20</span>
<span class="t" style="left:872.65px;top:1001.00px;font-size:15px;line-height:15px;color:#644b0f;letter-spacing:0.857px;-webkit-text-stroke:0.2px #644b0f;">Not paid</span>
<span class="t" style="left:1137.75px;top:1001.00px;font-size:15px;line-height:15px;color:#644b0f;letter-spacing:0.617px;-webkit-text-stroke:0.2px #644b0f;">Not Fulfilled</span>
<span class="t" style="left:1726.05px;top:1001.00px;font-size:18px;line-height:18px;color:#fff;letter-spacing:0.100px;font-weight:700;">Fulfill</span>
<span class="t" style="left:371.95px;top:1092.00px;font-size:16px;line-height:16px;color:#111;letter-spacing:1.638px;font-weight:700;">#1002</span>
<span class="t" style="left:485.30px;top:1092.00px;font-size:16px;line-height:16px;color:#111;letter-spacing:0.215px;-webkit-text-stroke:0.3px #111;">Sarah Davis</span>
<span class="t" style="left:674.15px;top:1092.00px;font-size:16px;line-height:16px;color:#111;letter-spacing:0.481px;-webkit-text-stroke:0.3px #111;">27.8.2025</span>
<span class="t" style="left:1313.45px;top:1092.00px;font-size:16px;line-height:16px;color:#111;letter-spacing:1.400px;font-weight:700;">$8.20</span>
<span class="t" style="left:872.65px;top:1091.00px;font-size:15px;line-height:15px;color:#644b0f;letter-spacing:0.857px;-webkit-text-stroke:0.2px #644b0f;">Not paid</span>
<span class="t" style="left:1137.75px;top:1091.00px;font-size:15px;line-height:15px;color:#644b0f;letter-spacing:0.617px;-webkit-text-stroke:0.2px #644b0f;">Not Fulfilled</span>
<span class="t" style="left:1726.05px;top:1091.00px;font-size:18px;line-height:18px;color:#fff;letter-spacing:0.100px;font-weight:700;">Fulfill</span>
<span class="t" style="left:371.95px;top:1182.00px;font-size:16px;line-height:16px;color:#111;letter-spacing:0.912px;font-weight:700;">#1001</span>
<span class="t" style="left:483.80px;top:1182.00px;font-size:16px;line-height:16px;color:#111;letter-spacing:0.514px;-webkit-text-stroke:0.3px #111;">Jennifer Wilson</span>
<span class="t" style="left:672.15px;top:1182.00px;font-size:16px;line-height:16px;color:#111;letter-spacing:0.481px;-webkit-text-stroke:0.3px #111;">27.8.2025</span>
<span class="t" style="left:1311.15px;top:1182.00px;font-size:16px;line-height:16px;color:#111;letter-spacing:1.400px;font-weight:700;">$8.20</span>
<span class="t" style="left:870.65px;top:1181.00px;font-size:15px;line-height:15px;color:#644b0f;letter-spacing:0.857px;-webkit-text-stroke:0.2px #644b0f;">Not paid</span>
<span class="t" style="left:1135.75px;top:1181.00px;font-size:15px;line-height:15px;color:#644b0f;letter-spacing:0.617px;-webkit-text-stroke:0.2px #644b0f;">Not Fulfilled</span>
<span class="t" style="left:1724.05px;top:1181.00px;font-size:18px;line-height:18px;color:#fff;letter-spacing:0.100px;font-weight:700;">Fulfill</span>
</div>
</body>
</html>
